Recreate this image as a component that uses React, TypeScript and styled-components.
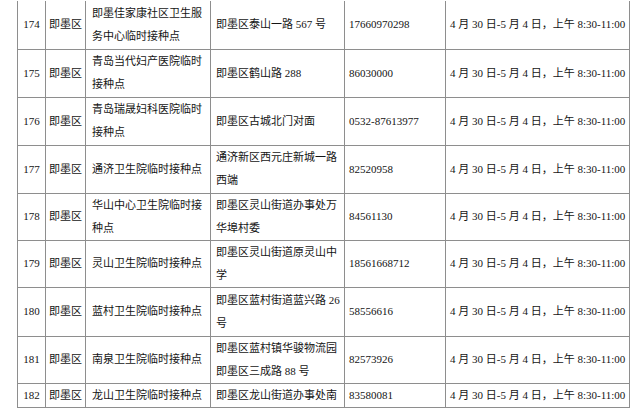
import styled, { createGlobalStyle } from "styled-components";

const GlobalStyle = createGlobalStyle`
  html, body {
    margin: 0;
    padding: 0;
    background: #ffffff;
  }
`;

const Page = styled.div`
  width: 640px;
  height: 409px;
  overflow: hidden;
  padding: 1px 0 0 17px;
  box-sizing: border-box;
  background: #ffffff;
`;

const Table = styled.table`
  border-collapse: collapse;
  table-layout: fixed;
  width: 612px;
  font-family: "Liberation Serif", "Noto Sans CJK SC", serif;
  font-size: 11px;
  color: #141414;
`;

const Col = styled.col<{ $w: number }>`
  width: ${(p) => p.$w}px;
`;

const Row = styled.tr<{ $h: number }>`
  height: ${(p) => p.$h}px;

  &:first-child td {
    border-top: none;
  }
`;

const Cell = styled.td<{ $align?: "left" | "center"; $pad?: number }>`
  border: 1px solid #8e8e8e;
  padding: 0 2px 0 ${(p) => p.$pad ?? 4}px;
  text-align: ${(p) => p.$align ?? "left"};
  vertical-align: middle;
  line-height: 23px;
  white-space: nowrap;
  overflow: hidden;
`;

interface ISite {
  no: number;
  name: string[];
  addr: string[];
  phone: string;
  h: number;
}

const sites: ISite[] = [
  { no: 174, name: ["即墨佳家康社区卫生服", "务中心临时接种点"], addr: ["即墨区泰山一路 567 号"], phone: "17660970298", h: 48 },
  { no: 175, name: ["青岛当代妇产医院临时", "接种点"], addr: ["即墨区鹤山路 288"], phone: "86030000", h: 48 },
  { no: 176, name: ["青岛瑞晟妇科医院临时", "接种点"], addr: ["即墨区古城北门对面"], phone: "0532-87613977", h: 48 },
  { no: 177, name: ["通济卫生院临时接种点"], addr: ["通济新区西元庄新城一路", "西端"], phone: "82520958", h: 48 },
  { no: 178, name: ["华山中心卫生院临时接", "种点"], addr: ["即墨区灵山街道办事处万", "华埠村委"], phone: "84561130", h: 47 },
  { no: 179, name: ["灵山卫生院临时接种点"], addr: ["即墨区灵山街道原灵山中", "学"], phone: "18561668712", h: 47 },
  { no: 180, name: ["蓝村卫生院临时接种点"], addr: ["即墨区蓝村街道蓝兴路 26", "号"], phone: "58556616", h: 49 },
  { no: 181, name: ["南泉卫生院临时接种点"], addr: ["即墨区蓝村镇华骏物流园", "即墨区三成路 88 号"], phone: "82573926", h: 47 },
  { no: 182, name: ["龙山卫生院临时接种点"], addr: ["即墨区龙山街道办事处南"], phone: "83580081", h: 24 },
];

const TIME = "4 月 30 日-5 月 4 日，上午 8:30-11:00";

function Lines({ lines }: { lines: string[] }) {
  return (
    <>
      {lines.map((l, i) => (
        <span key={i}>
          {i > 0 && <br />}
          {l}
        </span>
      ))}
    </>
  );
}

function App() {
  return (
    <Page>
      <GlobalStyle />
      <Table>
        <colgroup>
          <Col $w={28} />
          <Col $w={40} />
          <Col $w={125} />
          <Col $w={134} />
          <Col $w={101} />
          <Col $w={184} />
        </colgroup>
        <tbody>
          {sites.map((s) => (
            <Row key={s.no} $h={s.h}>
              <Cell $align="center" $pad={2}>{s.no}</Cell>
              <Cell $align="center" $pad={2}>即墨区</Cell>
              <Cell $pad={6}>
                <Lines lines={s.name} />
              </Cell>
              <Cell $pad={5}>
                <Lines lines={s.addr} />
              </Cell>
              <Cell>{s.phone}</Cell>
              <Cell>{TIME}</Cell>
            </Row>
          ))}
        </tbody>
      </Table>
    </Page>
  );
}

export default App;
